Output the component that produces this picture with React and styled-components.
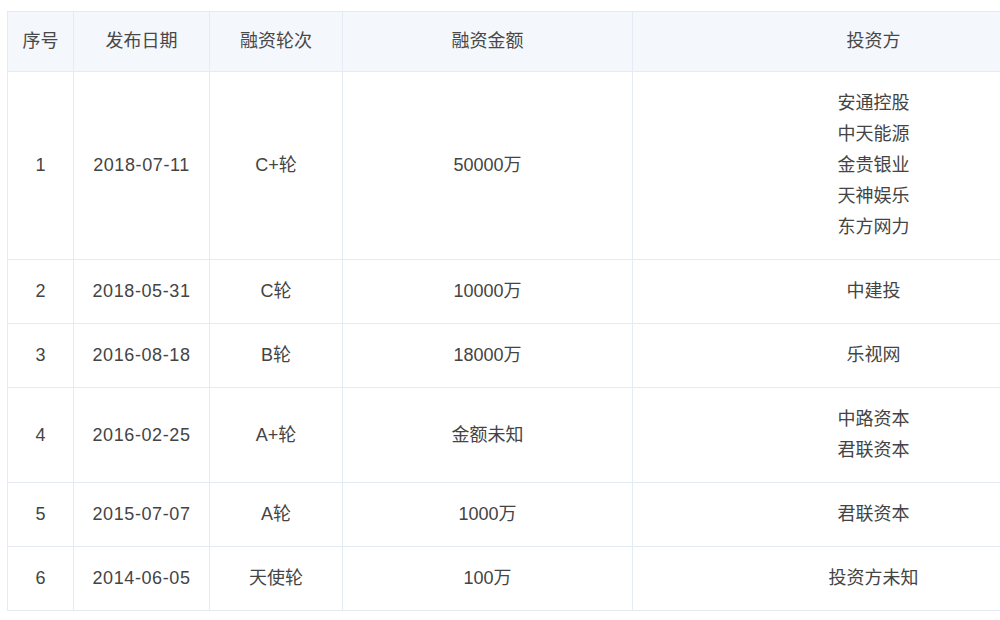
import React from 'react'
import styled, { createGlobalStyle } from 'styled-components'

const GlobalStyle = createGlobalStyle`
  html, body {
    margin: 0;
    padding: 0;
    background: #fff;
    overflow: hidden;
  }
`

const Page = styled.div`
  width: 1000px;
  height: 620px;
  overflow: hidden;
  padding: 11px 0 0 7px;
  box-sizing: border-box;
  font-family: "Liberation Sans", "Noto Sans CJK SC", sans-serif;
`

const Table = styled.table`
  border-collapse: collapse;
  table-layout: fixed;
  width: 1107px;
  color: #444;
  font-size: 18px;
`

const HeadCell = styled.th`
  background: #f4f7fc;
  border: 1px solid #e4ebf5;
  font-weight: normal;
  padding: 14px 0;
  line-height: 31px;
  text-align: center;
  color: #484848;
`

const Cell = styled.td`
  border: 1px solid #e4ebf5;
  padding: 16px 0;
  line-height: 31px;
  text-align: center;
  vertical-align: middle;
  letter-spacing: ${props => (props.wide ? '0.6px' : 'normal')};
`

const Line = styled.div`
  white-space: nowrap;
`

const columns = [
  { title: '序号', width: 66 },
  { title: '发布日期', width: 136 },
  { title: '融资轮次', width: 133 },
  { title: '融资金额', width: 290 },
  { title: '投资方', width: 482 },
]

const rows = [
  { no: 1, date: '2018-07-11', round: 'C+轮', amount: '50000万', investors: ['安通控股', '中天能源', '金贵银业', '天神娱乐', '东方网力'] },
  { no: 2, date: '2018-05-31', round: 'C轮', amount: '10000万', investors: ['中建投'] },
  { no: 3, date: '2016-08-18', round: 'B轮', amount: '18000万', investors: ['乐视网'] },
  { no: 4, date: '2016-02-25', round: 'A+轮', amount: '金额未知', investors: ['中路资本', '君联资本'] },
  { no: 5, date: '2015-07-07', round: 'A轮', amount: '1000万', investors: ['君联资本'] },
  { no: 6, date: '2014-06-05', round: '天使轮', amount: '100万', investors: ['投资方未知'] },
]

export default function App() {
  return (
    <Page>
      <GlobalStyle />
      <Table>
        <colgroup>
          {columns.map(col => <col key={col.title} style={{ width: col.width }} />)}
        </colgroup>
        <thead>
          <tr>
            {columns.map(col => <HeadCell key={col.title}>{col.title}</HeadCell>)}
          </tr>
        </thead>
        <tbody>
          {rows.map(row => (
            <tr key={row.no}>
              <Cell>{row.no}</Cell>
              <Cell wide>{row.date}</Cell>
              <Cell>{row.round}</Cell>
              <Cell>{row.amount}</Cell>
              <Cell>
                {row.investors.map(name => <Line key={name}>{name}</Line>)}
              </Cell>
            </tr>
          ))}
        </tbody>
      </Table>
    </Page>
  )
}
